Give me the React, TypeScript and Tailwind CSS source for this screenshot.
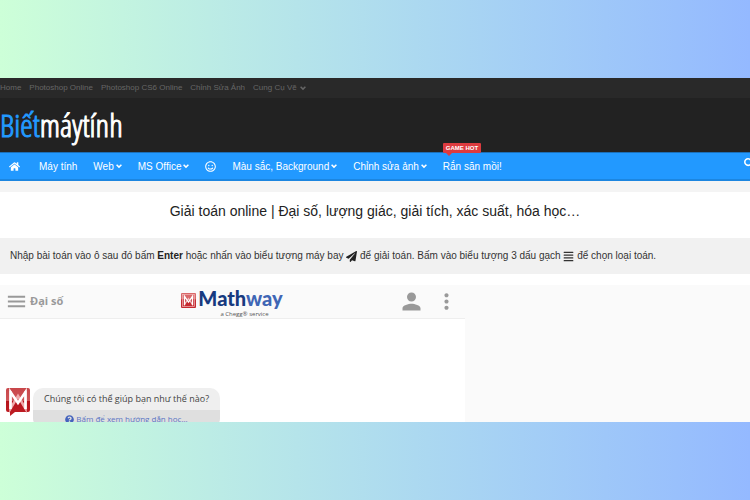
import { FaAlignJustify, FaHome, FaPaperPlane, FaQuestionCircle, FaRegSmile, FaSearch } from "react-icons/fa";
import { MdMenu, MdMoreVert, MdPerson } from "react-icons/md";

const topLinks = [
  { label: "Home" },
  { label: "Photoshop Online" },
  { label: "Photoshop CS6 Online" },
  { label: "Chỉnh Sửa Ảnh" },
  { label: "Cung Cụ Vẽ", menu: true },
];

function Chevron() {
  return (
    <svg viewBox="0 0 6 6" className="size-[6px]" fill="none" stroke="currentColor" strokeWidth="1.5" aria-hidden="true">
      <path d="M0.6 1.7L3 4.1l2.4-2.4" />
    </svg>
  );
}

function TopBar() {
  return (
    <nav className="flex h-5 items-center gap-2 bg-[#292929] text-[8px] text-[#666]">
      {topLinks.map((l) => (
        <a key={l.label} href="#" className="flex items-center gap-[3px] whitespace-nowrap">
          {l.label}
          {l.menu && <Chevron />}
        </a>
      ))}
    </nav>
  );
}

function NavLink({ label, menu }: { label: string; menu?: boolean }) {
  return (
    <a href="#" className="flex items-center gap-[2px] whitespace-nowrap">
      {label}
      {menu && <Chevron />}
    </a>
  );
}

function MainNav() {
  return (
    <nav className="flex h-[29px] items-center justify-between border-t border-b-2 border-t-[#1b6fb8] border-b-[#1c86e0] bg-[#2299ff] pl-[9px] text-[10px] text-white">
      <div className="flex items-center gap-4">
        <a href="#" aria-label="Trang chủ" className="mr-[3px]">
          <FaHome className="size-[11px]" />
        </a>
        <NavLink label="Máy tính" />
        <NavLink label="Web" menu />
        <NavLink label="MS Office" menu />
        <a href="#" aria-label="Mặt cười">
          <FaRegSmile className="size-[11px]" />
        </a>
        <NavLink label="Màu sắc, Background" menu />
        <NavLink label="Chỉnh sửa ảnh" menu />
        <div className="relative">
          <NavLink label="Rắn săn mồi!" />
          <span className="absolute bottom-full left-0 mb-[6px] rounded-[1px] bg-[#dd3b3f] px-[3px] text-[6px] leading-[10px] font-bold whitespace-nowrap text-white">
            GAME HOT
            <span className="absolute top-full left-[3px] border-x-[3px] border-t-[3px] border-x-transparent border-t-[#dd3b3f]" />
          </span>
        </div>
      </div>
      <button aria-label="Tìm kiếm" className="-mr-[4px] mb-[6px]">
        <FaSearch className="size-[10px]" />
      </button>
    </nav>
  );
}

function MathwayMark({ className }: { className: string }) {
  return (
    <svg viewBox="0 0 24 28" className={className} aria-hidden="true">
      <defs>
        <linearGradient id="mw" x1="0" y1="0" x2="0" y2="1">
          <stop offset="0" stopColor="#c8464a" />
          <stop offset="0.46" stopColor="#cf5558" />
          <stop offset="0.46" stopColor="#b5121b" />
          <stop offset="1" stopColor="#c02026" />
        </linearGradient>
      </defs>
      <path d="M2 0h20a2 2 0 0 1 2 2v20a2 2 0 0 1-2 2H9l-5 4v-4H2a2 2 0 0 1-2-2V2a2 2 0 0 1 2-2z" fill="url(#mw)" />
      <path d="M4.5 3v17.5L12 8l7.5 12.5V3" fill="none" stroke="#efa9ab" strokeWidth="2.6" />
      <path d="M4.5 21V4L12 15l7.5-11v17" fill="none" stroke="#fff" strokeWidth="2.6" />
    </svg>
  );
}

function MathwayLogo() {
  return (
    <div className="flex items-start gap-[2px]">
      <svg viewBox="0 0 15 15" className="mt-[7px] size-[15px]" aria-hidden="true">
        <rect width="15" height="7" rx="1" fill="#d9686a" />
        <rect y="6" width="15" height="9" rx="1" fill="#c42a30" />
        <rect x="1.5" y="1.5" width="12" height="12" fill="none" stroke="#f2b8b8" strokeWidth="0.7" />
        <path d="M3.5 3v8.6l4-6 4 6V3" fill="none" stroke="#f3c4c4" strokeWidth="1.2" />
        <path d="M3.5 12V3.4l4 5.8 4-5.8V12" fill="none" stroke="#fff" strokeWidth="1.3" />
      </svg>
      <div className="flex flex-col items-center">
        <span className="font-['Lato',sans-serif] text-[20px] leading-[25px] font-black text-[#173a80]">
          Math<span className="text-[#3f66b5]">way</span>
        </span>
        <span className="pl-2 text-[6px] leading-[6px] text-[#555]">a Chegg® service</span>
      </div>
    </div>
  );
}

function MathwayWidget() {
  return (
    <section className="w-[62%] font-['Open_Sans',sans-serif]">
      <header className="flex h-[34px] items-center border-b border-[#eee] bg-[#fafafa] pr-[6px] pl-[5px] text-[#999]">
        <div className="flex-1">
          <button className="flex items-center gap-[2px] text-[11px] font-bold">
            <MdMenu className="size-[23px]" />
            Đại số
          </button>
        </div>
        <MathwayLogo />
        <div className="flex flex-1 items-center justify-end gap-[9px]">
          <button aria-label="Tài khoản">
            <MdPerson className="size-[27px]" />
          </button>
          <button aria-label="Thêm">
            <MdMoreVert className="size-[25px]" />
          </button>
        </div>
      </header>
      <div className="flex items-start gap-[3px] bg-white px-[6px] pt-[69px] pb-10">
        <MathwayMark className="h-[28px] w-[24px]" />
        <div className="overflow-hidden rounded-[10px] bg-[#efefef] text-[9px]">
          <p className="px-[11px] leading-[22px] text-[#444]">Chúng tôi có thể giúp bạn như thế nào?</p>
          <a href="#" className="flex items-center justify-center gap-[2px] bg-[#dfdfdf] text-[8px] leading-[18px] text-[#5b76c4]">
            <FaQuestionCircle className="size-[9px] text-[#4463bd]" />
            Bấm để xem hướng dẫn học...
          </a>
        </div>
      </div>
    </section>
  );
}

export default function App() {
  return (
    <div className="h-screen bg-linear-to-r from-[#cdffd8] to-[#94b9ff] py-[78px] font-['Liberation_Sans',Arial,sans-serif]">
      <div className="h-full overflow-hidden bg-white">
        <TopBar />
        <header className="flex h-[54px] items-center bg-[#222]">
          <a
            href="#"
            className="font-['Open_Sans_Condensed_Light','Open_Sans_Condensed',sans-serif] text-[32px] text-white [-webkit-text-stroke:1px]"
          >
            <span className="text-[#2299ff]">Biết</span>máytính
          </a>
        </header>
        <MainNav />
        <main className="border-t-[11px] border-[#f4f4f4]">
          <h1 className="py-2 text-center text-[14px] leading-[22px] text-[#222]">
            Giải toán online | Đại số, lượng giác, giải tích, xác suất, hóa học…
          </h1>
          <p className="mt-2 bg-[#f1f1f1] px-[10px] text-[10px] leading-[36px] text-[#333]">
            Nhập bài toán vào ô sau đó bấm <strong className="text-[#222]">Enter</strong> hoặc nhấn vào biểu tượng máy bay{" "}
            <FaPaperPlane className="inline size-[11px] text-[#222]" /> để giải toán. Bấm vào biểu tượng 3 dấu gạch{" "}
            <FaAlignJustify className="inline size-[11px]" /> để chọn loại toán.
          </p>
          <div className="mt-[11px] bg-[#fafafa] pb-20">
            <MathwayWidget />
          </div>
        </main>
      </div>
    </div>
  );
}
